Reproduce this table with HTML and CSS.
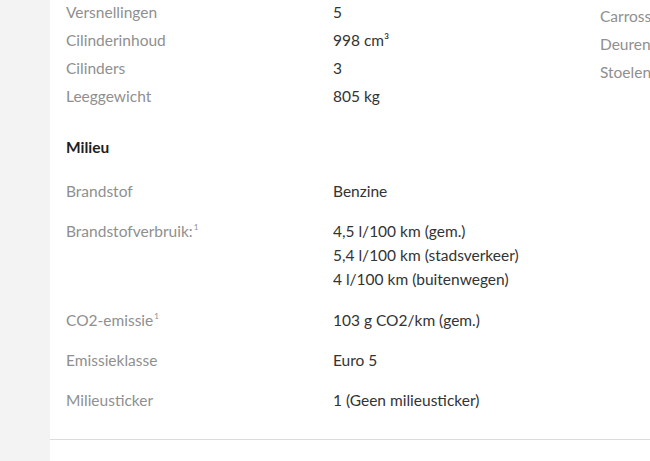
FILE: index.html
```html
<!DOCTYPE html>
<html lang="nl">
<head>
<meta charset="utf-8">
<link rel="stylesheet" href="styles.css">
</head>
<body>
<div class="page">
  <aside class="side"></aside>
  <main class="main">
    <div class="specs">
      <div class="col">
        <div class="row"><span class="label">Versnellingen</span><span class="value">5</span></div>
        <div class="row"><span class="label">Cilinderinhoud</span><span class="value">998 cm³</span></div>
        <div class="row"><span class="label">Cilinders</span><span class="value">3</span></div>
        <div class="row"><span class="label">Leeggewicht</span><span class="value">805 kg</span></div>
      </div>
      <div class="col col-right">
        <div class="row"><span class="label">Carrosserie</span></div>
        <div class="row"><span class="label">Deuren</span></div>
        <div class="row"><span class="label">Stoelen</span></div>
      </div>
    </div>
    <h3 class="heading">Milieu</h3>
    <div class="env">
      <div class="erow"><span class="label">Brandstof</span><span class="value">Benzine</span></div>
      <div class="erow"><span class="label">Brandstofverbruik:<sup>1</sup></span><span class="value">4,5 l/100 km (gem.)<br>5,4 l/100 km (stadsverkeer)<br>4 l/100 km (buitenwegen)</span></div>
      <div class="erow"><span class="label">CO2-emissie<sup>1</sup></span><span class="value">103 g CO2/km (gem.)</span></div>
      <div class="erow"><span class="label">Emissieklasse</span><span class="value">Euro 5</span></div>
      <div class="erow"><span class="label">Milieusticker</span><span class="value">1 (Geen milieusticker)</span></div>
    </div>
    <hr class="divider">
  </main>
</div>
</body>
</html>
```
FILE: styles.css
```css
html, body {
  margin: 0;
  padding: 0;
  height: 100%;
  overflow: hidden;
}
body {
  font-family: Lato, "Open Sans", sans-serif;
  font-size: 15.5px;
  color: #333;
  background: #fff;
}
.page {
  display: flex;
  min-height: 100%;
}
.side {
  width: 50px;
  flex: none;
  background: #f3f3f3;
}
.main {
  flex: 1;
  padding-left: 16px;
  overflow: hidden;
}
.specs {
  display: flex;
}
.col {
  width: 534px;
  flex: none;
}
.col-right {
  width: 267px;
  padding-top: 4px;
  white-space: nowrap;
}
.row {
  display: grid;
  grid-template-columns: 267px 1fr;
  line-height: 24px;
  margin-bottom: 4px;
}
.label {
  color: #8f8f8f;
}
.value {
  color: #333;
}
.label sup {
  font-size: 8px;
  line-height: 0;
  vertical-align: 7px;
  margin-left: 1px;
}
.heading {
  margin: 23px 0 12px;
  font-size: 15.5px;
  line-height: 24px;
  font-weight: 700;
  color: #1e1e1e;
}
.erow {
  display: grid;
  grid-template-columns: 267px 1fr;
  line-height: 24px;
  padding: 8px 0;
}
.erow + .erow + .erow {
  padding-top: 9px;
  padding-bottom: 7px;
}
.erow:last-child {
  padding-bottom: 8px;
}
.divider {
  margin: 20px 0 0 -16px;
  border: 0;
  border-top: 1px solid #dcdcdc;
  height: 0;
}
```
